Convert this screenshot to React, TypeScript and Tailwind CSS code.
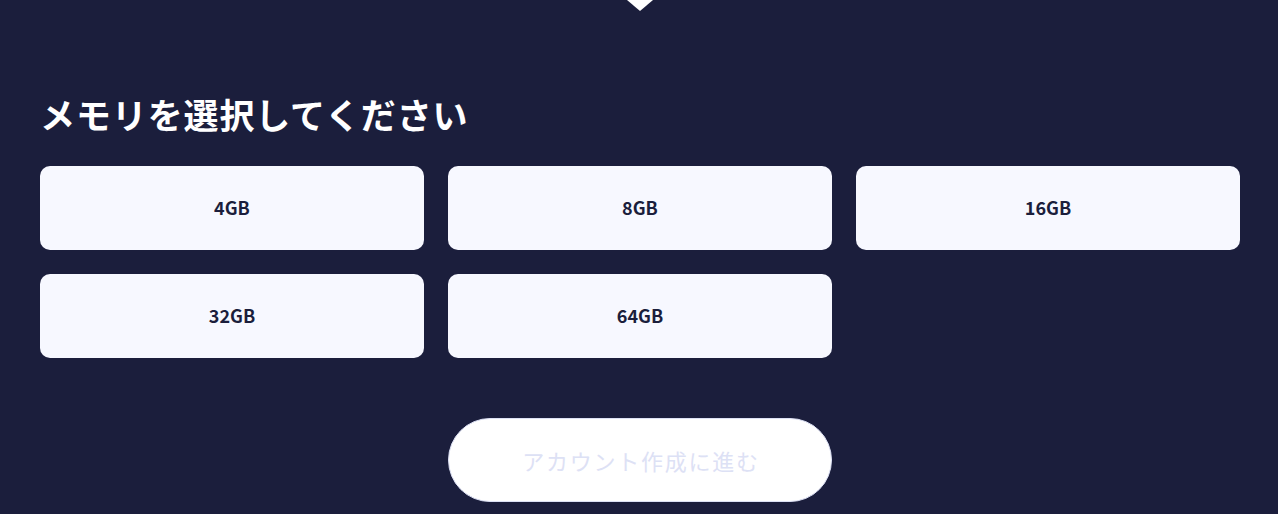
const options = ['4GB', '8GB', '16GB', '32GB', '64GB']

export default function App() {
  return (
    <div
      className="relative min-h-[514px] w-full bg-[#1b1e3c] px-10"
      style={{ fontFamily: '"Noto Sans CJK JP", "Noto Sans", sans-serif' }}
    >
      {/* notch from the step above */}
      <div className="absolute left-[627px] top-0 h-0 w-0 border-x-[13px] border-t-[11px] border-x-transparent border-t-white" />

      <div className="w-[1200px] pt-[90px]">
        <h2 className="text-[35px] font-bold leading-[48px] tracking-[0.025em] text-white">メモリを選択してください</h2>

        <div className="mt-[28px] grid grid-cols-[384px_384px_384px] gap-6">
          {options.map((o) => (
            <button
              key={o}
              type="button"
              className="flex h-[84px] items-center justify-center rounded-[10px] bg-[#f7f8ff] pb-[2px] text-[18px] font-bold text-[#1b1e3c]"
            >
              {o}
            </button>
          ))}
        </div>

        <div className="mt-[60px] flex justify-center">
          <button
            type="button"
            disabled
            className="h-[84px] w-[384px] rounded-full border border-[#dde1f5] bg-white pl-[2px] text-[22px] tracking-[0.08em] text-[#dde1f5]"
          >
            アカウント作成に進む
          </button>
        </div>
      </div>
    </div>
  )
}
